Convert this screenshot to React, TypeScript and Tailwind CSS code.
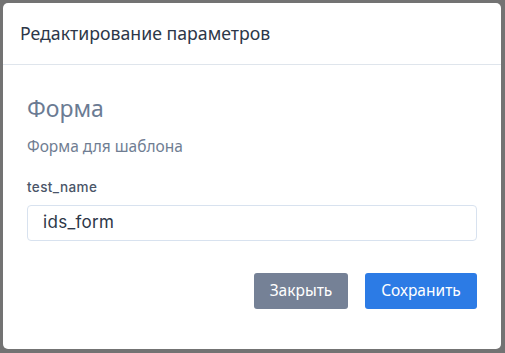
import React from "react";

export default function App() {
  return (
    <div className="w-[505px] h-[353px] bg-[#737373] p-[3px] pr-[4px] pb-[4px]" style={{ fontFamily: '"Noto Sans", "Open Sans", sans-serif' }}>
      <div className="w-full h-full bg-white rounded-[5px] flex flex-col">
        <div className="h-[62px] border-b border-[#dfe5ec] flex items-center px-[17px]">
          <h2 className="text-[17.7px] text-[#2d3748] leading-none">Редактирование параметров</h2>
        </div>
        <div className="px-[24px] pt-[29px] flex flex-col">
          <div className="text-[23px] text-[#6b7b93] leading-[28px]">Форма</div>
          <div className="mt-[14px] text-[15.5px] text-[#6f7d92] leading-[20px]">Форма для шаблона</div>
          <label className="mt-[22px] text-[13.5px] font-medium text-[#4a5568] leading-[18px] tracking-[0.4px]" style={{ fontFamily: 'Inter, sans-serif' }}>test_name</label>
          <div className="mt-[9px] h-[36px] border border-[#d8e2ef] rounded-[4px] flex items-center px-[15px] text-[17px] text-[#2d3748] tracking-[0.3px]" style={{ fontFamily: 'Inter, sans-serif' }}>ids_form</div>
          <div className="mt-[32px] flex justify-end gap-[17px]">
            <button className="h-[36px] w-[94px] rounded-[3px] bg-[#758196] text-white text-[15.5px]">Закрыть</button>
            <button className="h-[36px] w-[112px] rounded-[3px] bg-[#2c7be5] text-white text-[15.5px]">Сохранить</button>
          </div>
        </div>
      </div>
    </div>
  );
}
